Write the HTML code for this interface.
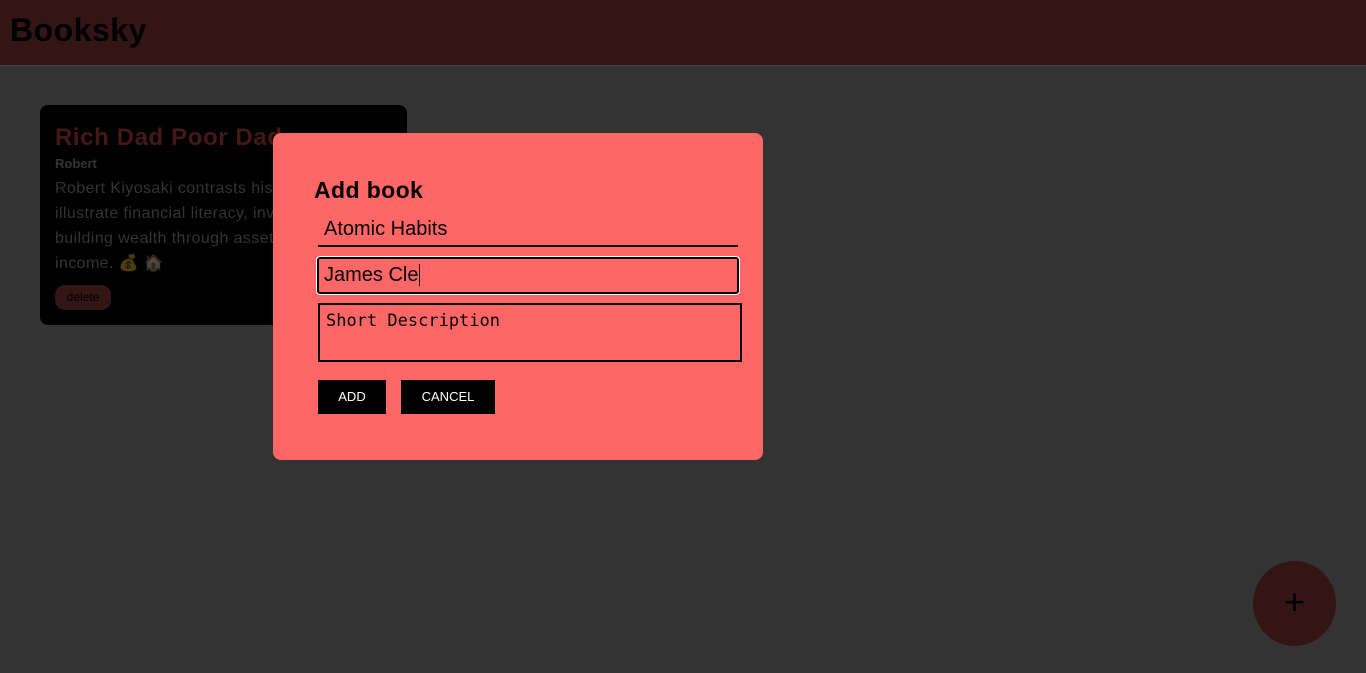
<!DOCTYPE html>
<html><head><style>
body{margin:0;width:1366px;height:673px;background:#333;font-family:"Liberation Sans",sans-serif;overflow:hidden;position:relative}
.hdr{position:absolute;left:0;top:0;width:1366px;height:65px;background:#331515;border-bottom:1px solid #444}
.hdr h1{margin:0;position:absolute;left:10px;top:12px;font-size:32px;font-weight:bold;color:#000;letter-spacing:0.5px}
.card{position:absolute;left:40px;top:105px;width:367px;height:220px;background:#000;border-radius:8px}
.card .t{position:absolute;left:15px;top:19px;font-size:24px;font-weight:bold;color:#451818;white-space:nowrap;letter-spacing:0.6px}
.card .a{position:absolute;left:15px;top:51px;font-size:13px;font-weight:bold;color:#333}
.card .d{position:absolute;left:15px;top:71px;font-size:16px;line-height:25px;color:#333;width:340px;letter-spacing:0.4px}
.card .del{position:absolute;left:15px;top:180px;width:56px;height:25px;border-radius:10px;background:#331515;color:#000;font-size:12px;text-align:center;line-height:25px}
.modal{position:absolute;left:273px;top:133px;width:490px;height:327px;background:#ff6666;border-radius:8px}
.modal h2{margin:0;position:absolute;left:41px;top:44px;font-size:23px;font-weight:bold;color:#000;letter-spacing:0.4px}
.i1{position:absolute;left:45px;top:82px;width:420px;height:30px;border-bottom:2px solid #000;font-size:20px;line-height:28px;text-indent:6px}
.i2{position:absolute;left:44px;top:124px;width:418px;height:33px;border:2px solid #000;outline:1px solid #fff;border-radius:3px;font-size:20px;line-height:32px;text-indent:5px}
.ta{position:absolute;left:45px;top:170px;border:2px solid #000;font-family:"DejaVu Sans Mono","Liberation Mono",monospace;font-size:17px;padding:6px 0 0 6px;box-sizing:border-box;height:59px;width:424px}
.b{position:absolute;top:247px;height:34px;background:#000;color:#fff;font-size:13px;text-align:center;line-height:34px}
.fab{position:absolute;left:1253px;top:561px;width:83px;height:85px;border-radius:50%;background:#331515;color:#000;font-size:36px;text-align:center;line-height:82px}
</style></head><body>
<div class="hdr"><h1>Booksky</h1></div>
<div class="card"><div class="t">Rich Dad Poor Dad</div><div class="a">Robert</div>
<div class="d">Robert Kiyosaki contrasts his two dads to illustrate financial literacy, investing and building wealth through assets and passive income. <span style="opacity:.3">💰 🏠</span></div>
<div class="del">delete</div></div>
<div class="modal"><h2>Add book</h2>
<div class="i1">Atomic Habits</div>
<div class="i2">James Cle<span style="border-left:1px solid #000;margin-left:1px"></span></div>
<div class="ta">Short Description</div>
<div class="b" style="left:45px;width:68px">ADD</div>
<div class="b" style="left:128px;width:94px">CANCEL</div>
</div>
<div class="fab">+</div>
</body></html>
